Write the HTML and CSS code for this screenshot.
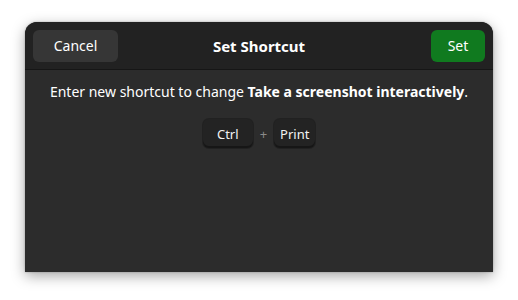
FILE: index.html
```html
<!DOCTYPE html>
<html>
<head>
<meta charset="utf-8">
<link rel="stylesheet" href="styles.css">
</head>
<body>
<div class="stage">
  <div class="dialog">
    <div class="header">
      <div class="left"><button class="btn cancel">Cancel</button></div>
      <div class="title">Set Shortcut</div>
      <div class="right"><button class="btn set">Set</button></div>
    </div>
    <div class="content">
      <p class="prompt">Enter new shortcut to change <b>Take a screenshot interactively</b>.</p>
      <div class="keys">
        <span class="key key-ctrl">Ctrl</span>
        <span class="plus">+</span>
        <span class="key key-print">Print</span>
      </div>
    </div>
  </div>
</div>
</body>
</html>
```
FILE: styles.css
```css
* { box-sizing: border-box; }
html, body { margin: 0; padding: 0; background: #ffffff; }
body { width: 518px; height: 300px; overflow: hidden; font-family: "Noto Sans", "Open Sans", sans-serif; }
.stage { padding: 22px 25px 0 25px; }
.dialog {
  width: 468px;
  height: 250px;
  background: #2c2c2c;
  border-radius: 12px 12px 0 0;
  box-shadow: 0 4px 14px rgba(0,0,0,0.35), 0 0 2px rgba(0,0,0,0.3);
  display: flex;
  flex-direction: column;
  color: #ffffff;
}
.header {
  height: 48px;
  background: #222222;
  border-radius: 12px 12px 0 0;
  border-bottom: 1px solid #161616;
  display: grid;
  grid-template-columns: 1fr auto 1fr;
  align-items: center;
  padding: 0 8px;
}
.left { display: flex; justify-content: flex-start; }
.right { display: flex; justify-content: flex-end; }
.btn {
  height: 32px;
  border: none;
  border-radius: 6px;
  font-family: inherit;
  font-size: 14px;
  color: #ffffff;
  padding: 0;
}
.cancel { width: 85px; background: #363636; }
.set { width: 54px; background: #107a1f; }
.title { font-weight: bold; font-size: 15px; }
.content { display: flex; flex-direction: column; align-items: center; }
.prompt { margin: 12px 0 0 0; font-size: 14px; color: #ffffff; }
.keys { display: flex; align-items: center; gap: 7px; margin-top: 18px; }
.key {
  height: 29px;
  display: flex;
  align-items: center;
  justify-content: center;
  font-size: 13px;
  color: #f2f2f2;
  background: #232323;
  border-radius: 6px;
  box-shadow: inset 0 -2px 0 rgba(0,0,0,0.35), 0 0 0 1px rgba(0,0,0,0.25);
}
.key-ctrl { width: 50px; }
.key-print { width: 41px; }
.plus { color: #8a8a8a; font-size: 13px; }
```
